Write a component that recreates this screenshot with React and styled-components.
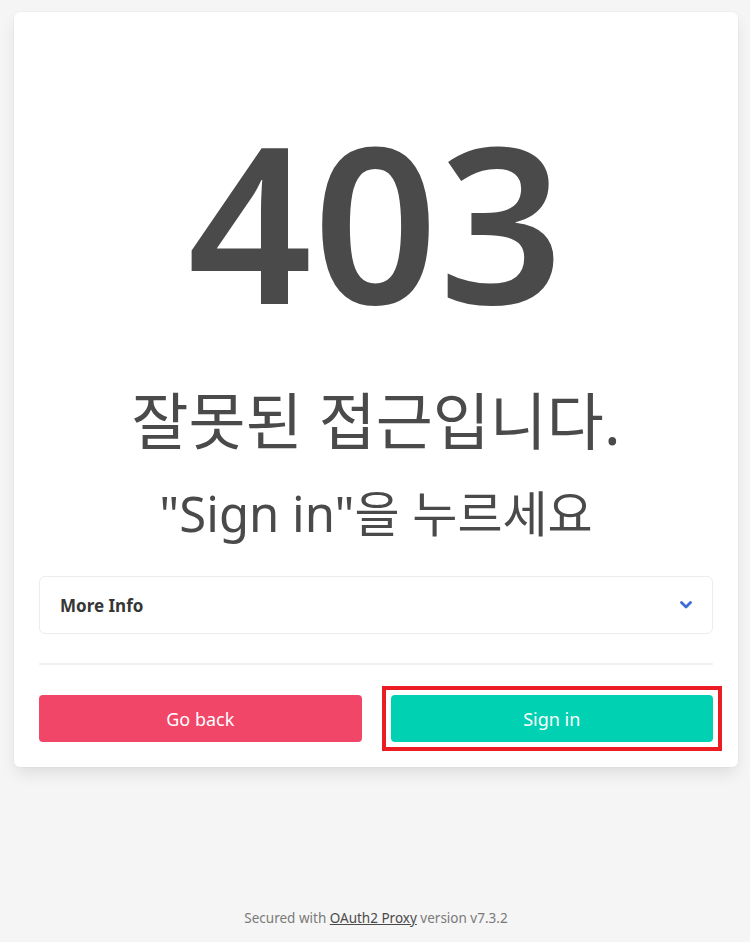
import React, { useState } from "react";
import styled, { createGlobalStyle } from "styled-components";

const GlobalStyle = createGlobalStyle`
	html, body {
		margin: 0;
		padding: 0;
		background-color: #f5f5f5;
	}

	body {
		font-family: "Noto Sans", "Noto Sans CJK KR", sans-serif;
		color: #4a4a4a;
	}
`;

const Page = styled.div`
	min-height: 100vh;
	box-sizing: border-box;
	display: flex;
	flex-direction: column;
	align-items: center;
	padding: 12px 12px 15px 14px;
`;

const Card = styled.div`
	width: 724px;
	box-sizing: border-box;
	background-color: #fff;
	border-radius: 6px;
	padding: 25px;
	box-shadow: 0 0.5em 1em -0.125em rgba(10, 10, 10, 0.1), 0 0 0 1px rgba(10, 10, 10, 0.02);
	display: flex;
	flex-direction: column;
	align-items: stretch;
	text-align: center;
`;

const ErrorCode = styled.h1`
	margin: 74px 0 0;
	font-size: 218px;
	font-weight: 600;
	line-height: 1;
	color: #4a4a4a;
	letter-spacing: 1px;
`;

const Title = styled.h2`
	margin: ${(props) => props.$top}px 0 0;
	font-family: "Noto Sans", "Noto Sans CJK KR", sans-serif;
	font-size: ${(props) => props.$size}px;
	font-weight: 400;
	line-height: 1;
	color: #4a4a4a;
`;

const Details = styled.div`
	margin-top: 38px;
	border: 1px solid #ededed;
	border-radius: 6px;
	text-align: left;
`;

const Summary = styled.button`
	width: 100%;
	height: 56px;
	border: none;
	background: transparent;
	display: flex;
	align-items: center;
	justify-content: space-between;
	padding: 0 20px;
	font-family: "Noto Sans", sans-serif;
	font-size: 17px;
	font-weight: 700;
	color: #363636;
	cursor: pointer;
`;

const InfoBody = styled.div`
	padding: 0 20px 16px;
	font-size: 15px;
	color: #4a4a4a;
`;

const Divider = styled.hr`
	margin: 29px 0 30px;
	border: none;
	height: 2px;
	background-color: #f2f2f2;
`;

const Buttons = styled.div`
	display: grid;
	grid-template-columns: 1fr 1fr;
	gap: 29px;
`;

const Button = styled.button`
	position: relative;
	height: 47px;
	border: none;
	border-radius: 4px;
	background-color: ${(props) => props.$color};
	color: #fff;
	font-family: "Noto Sans", sans-serif;
	font-size: 18px;
	cursor: pointer;

	&::after {
		content: "";
		display: ${(props) => (props.$highlight ? "block" : "none")};
		position: absolute;
		inset: -9px;
		border: 4px solid #ec1c24;
		pointer-events: none;
	}
`;

const Footer = styled.footer`
	margin-top: auto;
	font-size: 13.5px;
	line-height: 18px;
	color: #7a7a7a;
	text-align: center;

	a {
		color: #4a4a4a;
		text-decoration: underline;
	}
`;

function Chevron() {
	return (
		<svg width="12" height="8" viewBox="0 0 12 8" aria-hidden="true">
			<path d="M1.5 1.5 L6 6 L10.5 1.5" fill="none" stroke="#3e6bd6" strokeWidth="2.8" strokeLinecap="round" strokeLinejoin="round" />
		</svg>
	);
}

function App() {
	const [open, setOpen] = useState(false);

	return (
		<Page>
			<GlobalStyle />
			<Card>
				<ErrorCode>403</ErrorCode>
				<Title $size={62} $top={61}>
					잘못된 접근입니다.
				</Title>
				<Title $size={49} $top={37}>
					"Sign in"을 누르세요
				</Title>
				<Details>
					<Summary onClick={() => setOpen((curr) => !curr)}>
						More Info
						<Chevron />
					</Summary>
					{open && <InfoBody>Request ID: 403 Forbidden</InfoBody>}
				</Details>
				<Divider />
				<Buttons>
					<Button $color="#f14668">Go back</Button>
					<Button $color="#00d1b2" $highlight>
						Sign in
					</Button>
				</Buttons>
			</Card>
			<Footer>
				Secured with <a href="#">OAuth2 Proxy</a> version v7.3.2
			</Footer>
		</Page>
	);
}

export default App;
